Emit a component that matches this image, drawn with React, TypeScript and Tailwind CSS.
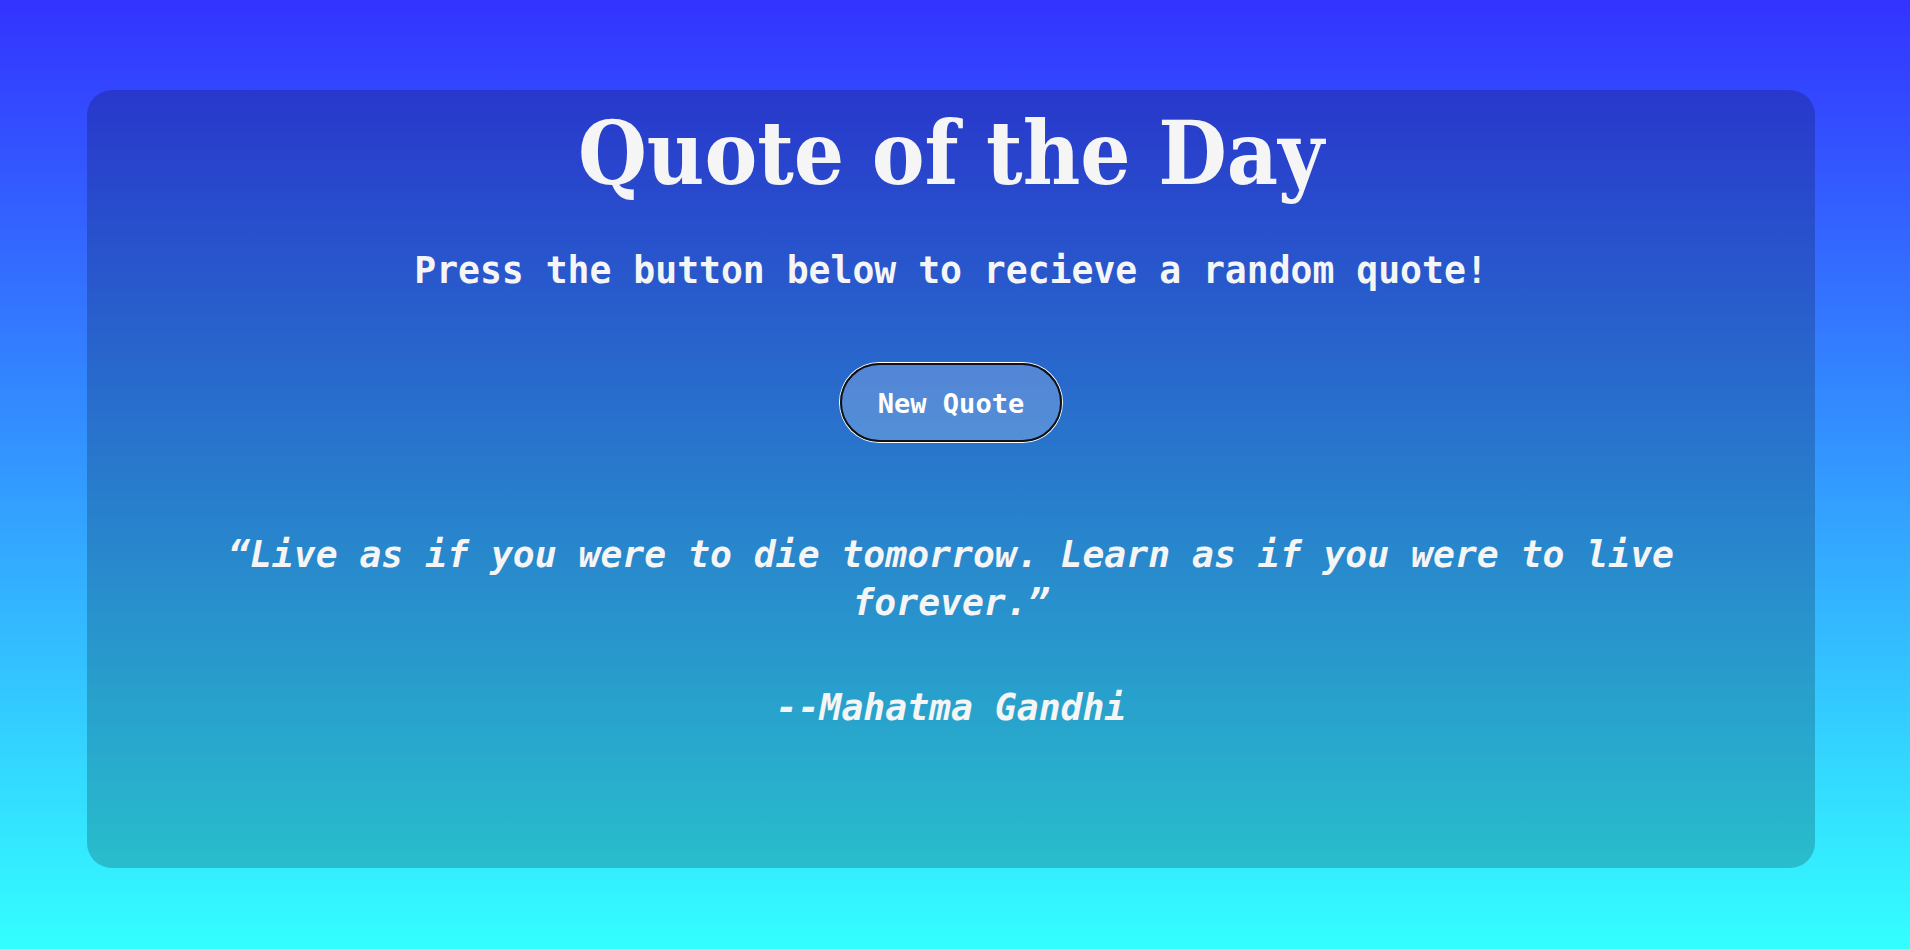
import React from "react";

export default function App() {
  return (
    <div className="w-full h-[949px] overflow-hidden bg-[linear-gradient(to_bottom,#3333ff,#33ffff)] pt-[90px]">
      <div className="ml-[87px] w-[1728px] h-[778px] rounded-[25px] bg-black/20 flex flex-col items-center text-[#f5f5f5]">
        <h1 className="mt-[8px] text-[88px] leading-[110px] font-bold font-['DejaVu_Serif_Condensed','DejaVu_Serif',serif] font-stretch-condensed">
          Quote of the Day
        </h1>
        <p className="mt-[41px] text-[36.4px] leading-[44px] font-bold font-['DejaVu_Sans_Mono',monospace]">
          Press the button below to recieve a random quote!
        </p>
        <button className="mt-[70px] w-[222px] h-[79px] pt-[3px] rounded-full border-2 border-[#111] bg-white/20 shadow-[0_0_0_1px_#ffffff] text-[27px] font-bold text-white font-['DejaVu_Sans_Mono',monospace]">
          New Quote
        </button>
        <p className="mt-[89px] px-[100px] text-center text-[36.4px] leading-[48px] italic font-bold font-['DejaVu_Sans_Mono',monospace]">
          “Live as if you were to die tomorrow. Learn as if you were to live forever.”
        </p>
        <p className="mt-[57px] text-[36.4px] leading-[48px] italic font-bold font-['DejaVu_Sans_Mono',monospace]">
          --Mahatma Gandhi
        </p>
      </div>
    </div>
  );
}
